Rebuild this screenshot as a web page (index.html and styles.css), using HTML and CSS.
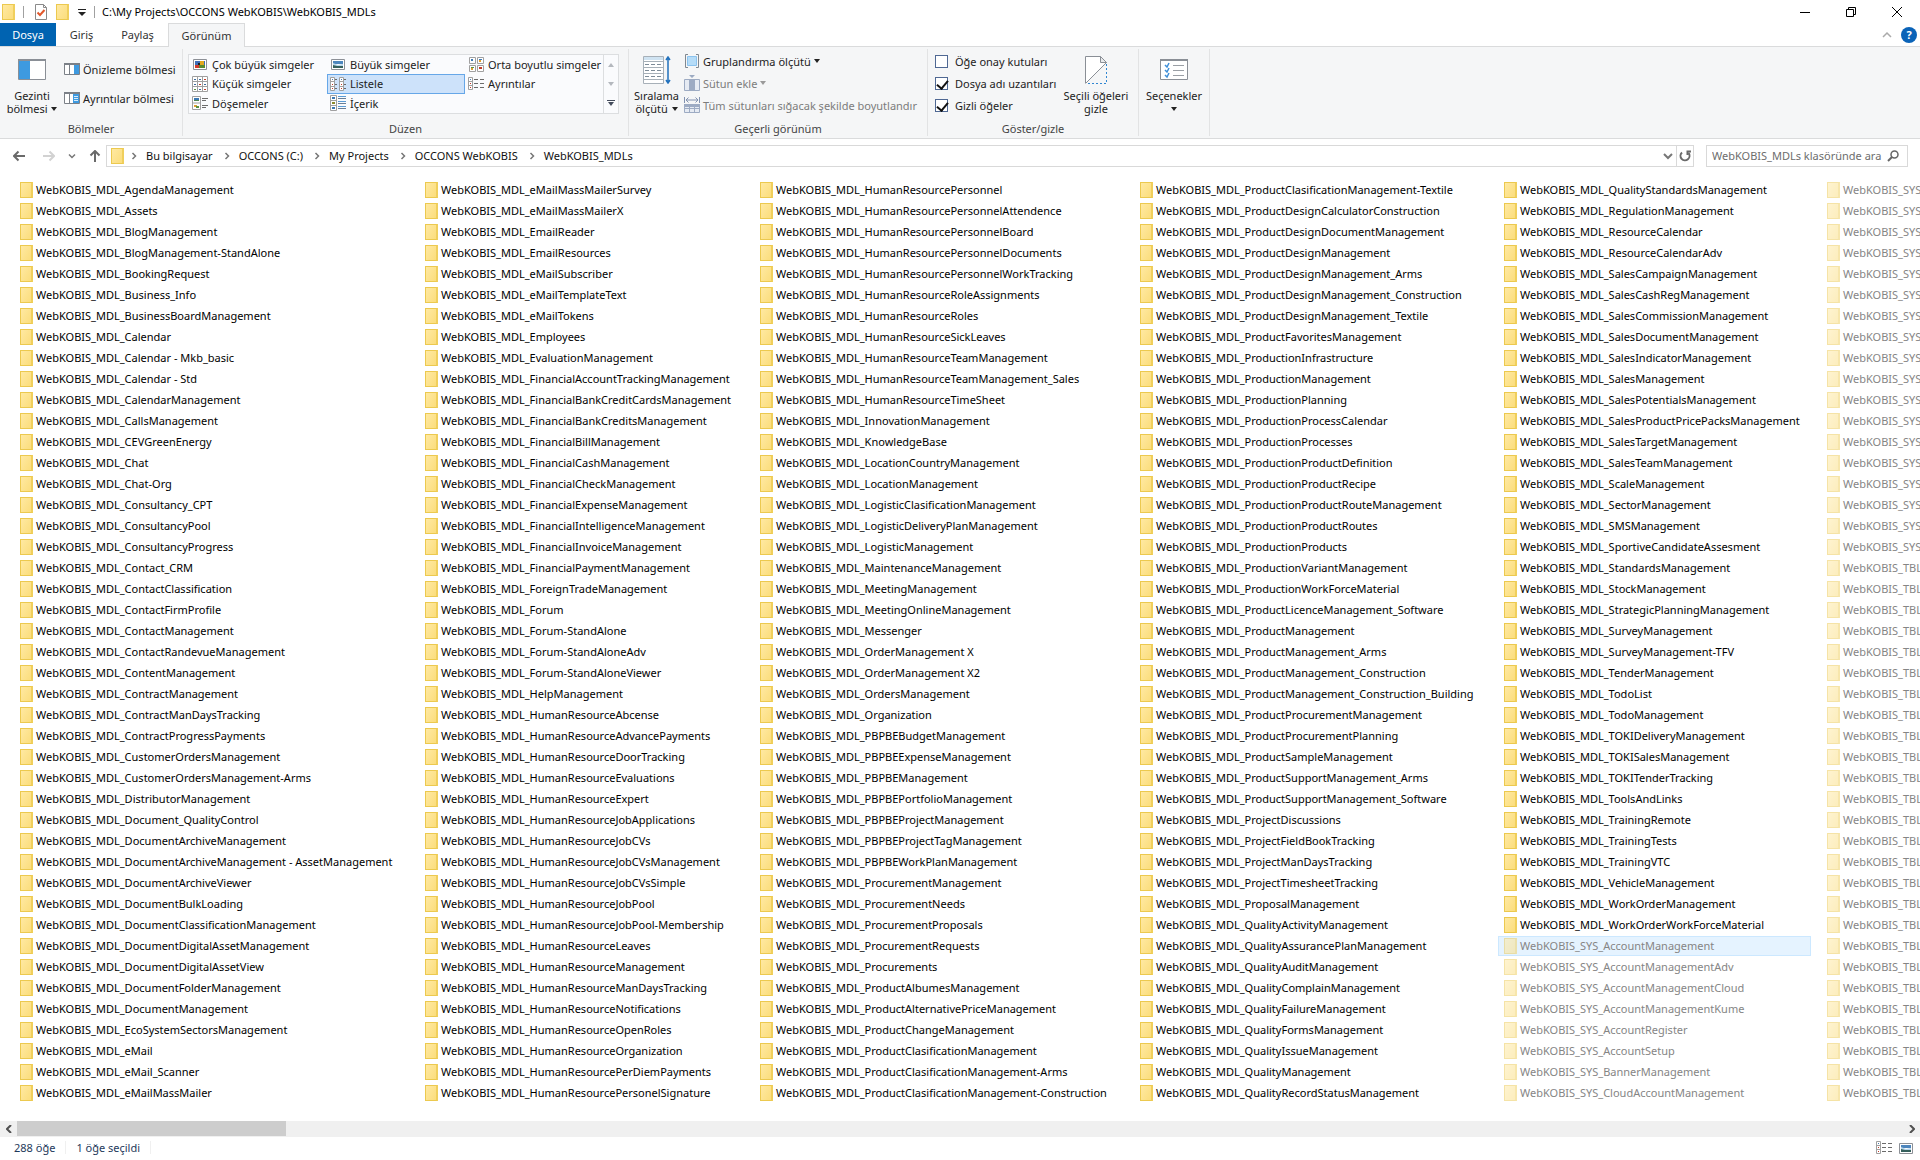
FILE: index.html
```html
<!DOCTYPE html>
<html lang="tr">
<head>
<meta charset="utf-8">
<title>C:\My Projects\OCCONS WebKOBIS\WebKOBIS_MDLs</title>
<link rel="stylesheet" href="styles.css">
</head>
<body>
<svg class="defs" aria-hidden="true">
  <symbol id="i-picture" viewBox="0 0 16 16">
    <path fill="#fff" stroke="#8c9096" d="M1.5 3.5h13v10h-13z"/>
    <path fill="#4d86bd" d="M3 5h10v3H3z"/><path fill="#b9d6ea" d="M3 7l5 2 5-1v2H3z"/><path fill="#35605c" d="M3 9l4 1h6v2H3z"/>
  </symbol>
  <symbol id="i-xlarge" viewBox="0 0 16 16">
    <path fill="#fff" stroke="#8c9096" d="M1.5 3.5h13v10h-13z"/>
    <path fill="#3f6fb8" d="M3 5h10v7H3z"/><path fill="#d23a2a" d="M3 9h4v3H3z"/><path fill="#e2a91e" d="M8 5h4v4H8z"/><path fill="#5a8a2f" d="M7 9h6v3H7z"/><path fill="#222" d="M6 7h2v2H6z"/>
  </symbol>
  <symbol id="i-medium" viewBox="0 0 16 16">
    <path fill="#fff" stroke="#a0a0a0" d="M1.5 1.5h6v6h-6zM9.500 1.5h6v6h-6zM1.500 9.500h6v6h-6zM9.500 9.500h6v6h-6z"/>
    <path fill="#3c79b4" d="M3 3h2v2H3zM11 3h3v1h-3z"/><path fill="#e0a030" d="M11 4h2v2h-2zM3 12h2v2H3z"/><path fill="#5a9140" d="M3 11h3v1H3z"/><path fill="#c33c2a" d="M11 11h3v2h-3z"/>
  </symbol>
  <symbol id="i-small" viewBox="0 0 16 16">
    <path fill="#fff" stroke="#a0a0a0" d="M.5.5h15v15H.5zM5.500.5v15M10.500.5v15M.5 5.500h15M.5 10.500h15"/>
    <path fill="#3c6b9c" d="M2 3h2v1H2zM7 3h2v1H7zM12 8h2v1h-2zM2 8h2v1H2zM7 13h2v1H7z"/><path fill="#c33c2a" d="M12 3h2v1h-2zM7 8h2v1H7zM12 13h2v1h-2z"/><path fill="#5a9140" d="M2 13h2v1H2z"/>
  </symbol>
  <symbol id="i-list" viewBox="0 0 16 16">
    <path fill="#fff" stroke="#a0a0a0" d="M.5 1.500h4v13h-4zM.5 5.500h4M.5 10.500h4M9.500 1.500h4v13h-4zM9.500 5.500h4M9.500 10.500h4"/>
    <path fill="#4a7bb0" d="M2 3h1v1H2zM11 3h1v1h-1z"/><path fill="#c33c2a" d="M2 12h1v1H2zM11 12h1v1h-1zM2 8h1v1H2zM11 8h1v1h-1z"/>
    <path stroke="#6b6b6b" d="M5 3.500h2M5 8.500h2M5 12.500h2M14 3.500h2M14 8.500h2M14 12.500h2"/>
  </symbol>
  <symbol id="i-details" viewBox="0 0 16 16">
    <path fill="#fff" stroke="#a0a0a0" d="M.5 1.500h4v12h-4zM.5 5.500h4M.5 9.500h4"/>
    <path fill="#4a7bb0" d="M2 3h1v1H2z"/><path fill="#c33c2a" d="M2 7h1v1H2zM2 11h1v1H2z"/>
    <path stroke="#6b6b6b" d="M6 3.500h4M12 3.500h4M6 7.500h4M12 7.500h4M6 11.500h4M12 11.500h4"/>
  </symbol>
  <symbol id="i-tiles" viewBox="0 0 16 16">
    <path fill="#fff" stroke="#a0a0a0" d="M.500 1.500h8v13h-8zM.500 8h8"/>
    <path fill="#3c79b4" d="M2 3h5v2H2z"/><path fill="#4d8450" d="M2 5h5v1H2z"/><path fill="#e0a030" d="M2 10h3v2H2z"/><path fill="#5a9140" d="M4 11h3v2H4z"/>
    <path stroke="#6b6b6b" d="M10 3.500h6M10 5.500h4M10 10.500h6M10 12.500h4"/>
  </symbol>
  <symbol id="i-content" viewBox="0 0 16 16">
    <path fill="#fff" stroke="#a0a0a0" d="M.500.5h6v15h-6zM.500 5.500h6M.500 10.500h6"/>
    <path fill="#3c79b4" d="M2 2h3v2H2zM2 12h3v2H2z"/><path fill="#8c8a2a" d="M2 7h3v2H2z"/>
    <path stroke="#5b9bd5" d="M8 1.500h8M8 6.500h8M8 11.500h8"/><path stroke="#6b7f96" d="M8 3.500h8M8 8.500h8M8 13.500h8"/>
  </symbol>
  <symbol id="i-chevron" viewBox="0 0 6 8"><path fill="none" stroke="#777" stroke-width="1.500" d="M1.500 1 4.500 4 1.500 7"/></symbol>
  <symbol id="i-down" viewBox="0 0 10 8"><path fill="none" stroke="#777" stroke-width="2" d="M1 2l4 4 4-4"/></symbol>
</svg>

<header class="titlebar">
  <span class="folder"></span>
  <span class="divider"></span>
  <button class="plain" aria-label="Özellikler"><svg width="12" height="16" viewBox="0 0 12 16"><path fill="#fff" stroke="#8a8a8a" d="M.5.5h8l3 3v12H.5z"/><path fill="none" stroke="#8a8a8a" d="M8.500.5v3h3"/><path fill="none" stroke="#e2582c" stroke-width="2" d="M2.500 8.500 5 11l4.500-5"/></svg></button>
  <button class="plain" aria-label="Yeni klasör"><span class="folder"></span></button>
  <button class="plain" aria-label="Özelleştir"><svg width="8" height="8" viewBox="0 0 8 8"><path fill="#222" d="M0 1h8v1H0zM0 4h8L4 8z"/></svg></button>
  <span class="divider"></span>
  <h1>C:\My Projects\OCCONS WebKOBIS\WebKOBIS_MDLs</h1>
  <div class="window-buttons">
    <button class="plain" aria-label="Simge durumuna küçült"><svg width="10" height="10" viewBox="0 0 10 10"><path stroke="#000" d="M0 5.500h10"/></svg></button>
    <button class="plain" aria-label="Önceki boyut"><svg width="10" height="10" viewBox="0 0 10 10"><path fill="none" stroke="#000" d="M.5 2.500h7v7h-7zM2.500 2.500v-2h7v7h-2"/></svg></button>
    <button class="plain" aria-label="Kapat"><svg width="10" height="10" viewBox="0 0 10 10"><path stroke="#000" d="M0 0l10 10M10 0 0 10"/></svg></button>
  </div>
</header>

<nav class="tabs">
  <button class="tab file-tab">Dosya</button>
  <button class="tab home-tab">Giriş</button>
  <button class="tab share-tab">Paylaş</button>
  <button class="tab active">Görünüm</button>
  <div class="tab-tools">
    <button class="plain" aria-label="Şeridi simge durumuna küçült"><svg width="10" height="8" viewBox="0 0 10 8"><path fill="none" stroke="#aaa" stroke-width="1.500" d="M1 6l4-4 4 4"/></svg></button>
    <button class="help" aria-label="Yardım">?</button>
  </div>
</nav>

<section class="ribbon">
  <div class="group panes">
    <div class="group-body">
      <button class="big">
        <svg width="28" height="22" viewBox="0 0 28 22"><path fill="#fff" stroke="#8a8f96" d="M.5.5h27v20H.5z"/><path fill="#8a8f96" d="M0 0h28v2H0z"/><path fill="#3e9ae0" d="M1 2h11v18H1z"/></svg>
        <span>Gezinti<br>bölmesi <i class="arrow"></i></span>
      </button>
      <div class="stack pane-stack">
        <button class="small"><svg width="16" height="12" viewBox="0 0 16 12"><path fill="#fff" stroke="#7b8087" d="M.5.5h15v11H.5zM5.500 1v10"/><path fill="#7b8087" d="M0 0h16v2H0z"/><path fill="#3e9ae0" d="M10 2h5v9h-5z"/></svg>Önizleme bölmesi</button>
        <button class="small"><svg width="16" height="12" viewBox="0 0 16 12"><path fill="#fff" stroke="#7b8087" d="M.5.5h15v11H.5zM5.500 1v10"/><path fill="#7b8087" d="M0 0h16v2H0z"/><path fill="#3e9ae0" d="M9 2h6v9H9z"/><path stroke="#d8ecfb" d="M10 4.500h4M10 6.500h4M10 8.500h4"/></svg>Ayrıntılar bölmesi</button>
      </div>
    </div>
    <h2>Bölmeler</h2>
  </div>
  <div class="group layout">
    <div class="gallery">
      <div class="gallery-grid">
        <button class="cell"><svg><use href="#i-xlarge"/></svg>Çok büyük simgeler</button>
        <button class="cell"><svg><use href="#i-picture"/></svg>Büyük simgeler</button>
        <button class="cell"><svg><use href="#i-medium"/></svg>Orta boyutlu simgeler</button>
        <button class="cell"><svg><use href="#i-small"/></svg>Küçük simgeler</button>
        <button class="cell chosen"><svg><use href="#i-list"/></svg>Listele</button>
        <button class="cell"><svg><use href="#i-details"/></svg>Ayrıntılar</button>
        <button class="cell"><svg><use href="#i-tiles"/></svg>Döşemeler</button>
        <button class="cell"><svg><use href="#i-content"/></svg>İçerik</button>
      </div>
      <div class="gallery-scroll">
        <button class="plain" aria-label="Yukarı"><svg width="6" height="4" viewBox="0 0 6 4"><path fill="#b4b8be" d="M0 4h6L3 0z"/></svg></button>
        <button class="plain" aria-label="Aşağı"><svg width="6" height="4" viewBox="0 0 6 4"><path fill="#b4b8be" d="M0 0h6L3 4z"/></svg></button>
        <button class="plain" aria-label="Diğer"><svg width="8" height="6" viewBox="0 0 8 6"><path fill="#444c5c" d="M0 0h8v1H0zM1 2h6L4 6z"/></svg></button>
      </div>
    </div>
    <h2>Düzen</h2>
  </div>
  <div class="group current">
    <div class="group-body">
      <button class="big">
        <svg width="28" height="28" viewBox="0 0 28 28"><path fill="#fff" stroke="#a7b0b8" d="M.5.500h20v27H.5zM.5 5.500h20M.5 11.500h20M.5 17.500h20M.5 23.500h20"/><path fill="#cfe3f2" d="M1 1h19v3H1z"/><path stroke="#7d8b97" stroke-dasharray="4 2" d="M2 8.500h18M2 14.500h18M2 20.500h18"/><path fill="none" stroke="#2272bd" stroke-width="1.500" d="M25 2v24M23 4l2-3 2 3M23 24l2 3 2-3"/></svg>
        <span>Sıralama<br>ölçütü <i class="arrow"></i></span>
      </button>
      <div class="stack">
        <button class="small"><svg width="16" height="16" viewBox="0 0 16 16"><path fill="none" stroke="#808890" d="M4 1.500H1.500v13H4M12 1.500h2.500v13H12"/><path fill="#b5dcf8" stroke="#8cc3ee" d="M3.500 3.500h9v9h-9z"/></svg>Gruplandırma ölçütü <i class="arrow"></i></button>
        <button class="small" disabled><svg width="16" height="16" viewBox="0 0 16 16"><path fill="#e6ebf3" stroke="#9dabc3" d="M.5 4.500h15v11H.5zM5.500 4v11M10.500 4v11"/><path fill="#9dabc3" d="M6 5h4v10H6zM5 0h6L8 3z"/></svg>Sütun ekle <i class="arrow"></i></button>
        <button class="small" disabled><svg width="16" height="16" viewBox="0 0 16 16"><path fill="#e6ebf3" stroke="#9dabc3" d="M.5 7.500h15v8H.5zM.5 11.500h15M5.500 10v5M10.500 10v5"/><path fill="#9dabc3" d="M0 7h16v3H0z"/><path fill="none" stroke="#8292b0" d="M.5 0v6M15.500 0v6M2 3h12M4.500.500 2 3l2.500 2.500M11.500.5 14 3l-2.500 2.500"/></svg>Tüm sütunları sığacak şekilde boyutlandır</button>
      </div>
    </div>
    <h2>Geçerli görünüm</h2>
  </div>
  <div class="group show">
    <div class="group-body">
      <div class="stack">
        <label class="check"><input type="checkbox">Öğe onay kutuları</label>
        <label class="check"><input type="checkbox" checked>Dosya adı uzantıları</label>
        <label class="check"><input type="checkbox" checked>Gizli öğeler</label>
      </div>
      <button class="big">
        <svg width="22" height="28" viewBox="0 0 22 28"><path fill="#fff" d="M.5 27V.5h15l6 6z"/><path fill="none" stroke="#8a8f96" d="M.5 27V.5h15l6 6L.5 27.500"/><path fill="#e8eaec" stroke="#8a8f96" d="M15.500.5v6h6z"/><path fill="none" stroke="#2f86d2" stroke-dasharray="2 2" d="M21.500 8v19.500H2"/></svg>
        <span>Seçili öğeleri<br>gizle</span>
      </button>
    </div>
    <h2>Göster/gizle</h2>
  </div>
  <div class="group options">
    <div class="group-body">
      <button class="big">
        <svg width="28" height="22" viewBox="0 0 28 22"><path fill="#fff" stroke="#8a8f96" d="M.5.500h27v20H.5z"/><path fill="#8a8f96" d="M0 0h28v2H0z"/><path fill="none" stroke="#3e8fd8" stroke-width="1.500" d="M5 6l2 2 2-4M5 11l2 2 2-4M5 16l2 2 2-4"/><path stroke="#9a9fa5" d="M13 6.500h11M13 11.500h11M13 16.500h11"/></svg>
        <span>Seçenekler<br><i class="arrow"></i></span>
      </button>
    </div>
  </div>
</section>

<div class="address-row">
  <div class="nav-buttons">
    <button class="plain" aria-label="Geri"><svg width="12" height="12" viewBox="0 0 12 12"><path fill="none" stroke="#6a6a6a" stroke-width="2" d="M12 6H1M5.500 1.500 1 6l4.500 4.500"/></svg></button>
    <button class="plain" aria-label="İleri"><svg width="12" height="12" viewBox="0 0 12 12"><path fill="none" stroke="#d2d2d2" stroke-width="2" d="M0 6h11M6.500 1.500 11 6l-4.500 4.500"/></svg></button>
    <button class="plain recent" aria-label="Son konumlar"><svg width="8" height="6" viewBox="0 0 10 8"><path fill="none" stroke="#777" stroke-width="2" d="M1 2l4 4 4-4"/></svg></button>
    <button class="plain" aria-label="Yukarı"><svg width="12" height="12" viewBox="0 0 12 12"><path fill="none" stroke="#6a6a6a" stroke-width="2" d="M6 12V1M1.500 5.500 6 1l4.500 4.500"/></svg></button>
  </div>
  <div class="address">
    <span class="folder"></span>
    <ol class="crumbs">
      <li><svg><use href="#i-chevron"/></svg><a href="#">Bu bilgisayar</a></li>
      <li><svg><use href="#i-chevron"/></svg><a href="#">OCCONS (C:)</a></li>
      <li><svg><use href="#i-chevron"/></svg><a href="#">My Projects</a></li>
      <li><svg><use href="#i-chevron"/></svg><a href="#">OCCONS WebKOBIS</a></li>
      <li><svg><use href="#i-chevron"/></svg><a href="#">WebKOBIS_MDLs</a></li>
    </ol>
    <button class="plain history" aria-label="Önceki konumlar"><svg width="10" height="8"><use href="#i-down"/></svg></button>
    <button class="plain refresh" aria-label="Yenile"><svg width="12" height="12" viewBox="0 0 12 12"><path fill="none" stroke="#6a6a6a" stroke-width="2" d="M9.500 3A4.500 4.500 0 1 1 3 2.500"/><path fill="none" stroke="#6a6a6a" stroke-width="2" d="M12 1.500H8.500V5"/></svg></button>
  </div>
  <div class="search">
    <input type="text" placeholder="WebKOBIS_MDLs klasöründe ara" aria-label="WebKOBIS_MDLs klasöründe ara">
    <svg width="12" height="12" viewBox="0 0 12 12"><circle cx="7.500" cy="4.500" r="3.500" fill="none" stroke="#666" stroke-width="1.500"/><path stroke="#666" stroke-width="2" d="M5 7 1 11"/></svg>
  </div>
</div>

<main><ul class="files" id="files" role="listbox" aria-label="Dosyalar"></ul></main>

<div class="scrollbar">
  <button class="plain" aria-label="Sola kaydır"><svg width="6" height="8" viewBox="0 0 6 8"><path fill="none" stroke="#505050" stroke-width="2" d="M5 0 1 4l4 4"/></svg></button>
  <div class="track"><div class="thumb"></div></div>
  <button class="plain" aria-label="Sağa kaydır"><svg width="6" height="8" viewBox="0 0 6 8"><path fill="none" stroke="#505050" stroke-width="2" d="M1 0l4 4-4 4"/></svg></button>
</div>

<footer class="status">
  <span>288 öğe</span>
  <span>1 öğe seçildi</span>
  <div class="view-switch">
    <button class="plain" aria-label="Ayrıntılar"><svg width="16" height="16"><use href="#i-details"/></svg></button>
    <button class="plain" aria-label="Büyük simgeler"><svg width="16" height="16"><use href="#i-picture"/></svg></button>
  </div>
</footer>
<script src="files.js"></script>
</body>
</html>
```
FILE: files.js
```js
// Folder names without the shared "WebKOBIS_" prefix, in display order.
const modules = `AgendaManagement|Assets|BlogManagement|BlogManagement-StandAlone|BookingRequest|Business_Info|BusinessBoardManagement|Calendar|Calendar - Mkb_basic|Calendar - Std|CalendarManagement|CallsManagement|CEVGreenEnergy|Chat|Chat-Org|Consultancy_CPT|ConsultancyPool|ConsultancyProgress|Contact_CRM|ContactClassification|ContactFirmProfile|ContactManagement|ContactRandevueManagement|ContentManagement|ContractManagement|ContractManDaysTracking|ContractProgressPayments|CustomerOrdersManagement|CustomerOrdersManagement-Arms|DistributorManagement|Document_QualityControl|DocumentArchiveManagement|DocumentArchiveManagement - AssetManagement|DocumentArchiveViewer|DocumentBulkLoading|DocumentClassificationManagement|DocumentDigitalAssetManagement|DocumentDigitalAssetView|DocumentFolderManagement|DocumentManagement|EcoSystemSectorsManagement|eMail|eMail_Scanner|eMailMassMailer
eMailMassMailerSurvey|eMailMassMailerX|EmailReader|EmailResources|eMailSubscriber|eMailTemplateText|eMailTokens|Employees|EvaluationManagement|FinancialAccountTrackingManagement|FinancialBankCreditCardsManagement|FinancialBankCreditsManagement|FinancialBillManagement|FinancialCashManagement|FinancialCheckManagement|FinancialExpenseManagement|FinancialIntelligenceManagement|FinancialInvoiceManagement|FinancialPaymentManagement|ForeignTradeManagement|Forum|Forum-StandAlone|Forum-StandAloneAdv|Forum-StandAloneViewer|HelpManagement|HumanResourceAbcense|HumanResourceAdvancePayments|HumanResourceDoorTracking|HumanResourceEvaluations|HumanResourceExpert|HumanResourceJobApplications|HumanResourceJobCVs|HumanResourceJobCVsManagement|HumanResourceJobCVsSimple|HumanResourceJobPool|HumanResourceJobPool-Membership|HumanResourceLeaves|HumanResourceManagement|HumanResourceManDaysTracking|HumanResourceNotifications|HumanResourceOpenRoles|HumanResourceOrganization|HumanResourcePerDiemPayments|HumanResourcePersonelSignature
HumanResourcePersonnel|HumanResourcePersonnelAttendence|HumanResourcePersonnelBoard|HumanResourcePersonnelDocuments|HumanResourcePersonnelWorkTracking|HumanResourceRoleAssignments|HumanResourceRoles|HumanResourceSickLeaves|HumanResourceTeamManagement|HumanResourceTeamManagement_Sales|HumanResourceTimeSheet|InnovationManagement|KnowledgeBase|LocationCountryManagement|LocationManagement|LogisticClasificationManagement|LogisticDeliveryPlanManagement|LogisticManagement|MaintenanceManagement|MeetingManagement|MeetingOnlineManagement|Messenger|OrderManagement X|OrderManagement X2|OrdersManagement|Organization|PBPBEBudgetManagement|PBPBEExpenseManagement|PBPBEManagement|PBPBEPortfolioManagement|PBPBEProjectManagement|PBPBEProjectTagManagement|PBPBEWorkPlanManagement|ProcurementManagement|ProcurementNeeds|ProcurementProposals|ProcurementRequests|Procurements|ProductAlbumesManagement|ProductAlternativePriceManagement|ProductChangeManagement|ProductClasificationManagement|ProductClasificationManagement-Arms|ProductClasificationManagement-Construction
ProductClasificationManagement-Textile|ProductDesignCalculatorConstruction|ProductDesignDocumentManagement|ProductDesignManagement|ProductDesignManagement_Arms|ProductDesignManagement_Construction|ProductDesignManagement_Textile|ProductFavoritesManagement|ProductionInfrastructure|ProductionManagement|ProductionPlanning|ProductionProcessCalendar|ProductionProcesses|ProductionProductDefinition|ProductionProductRecipe|ProductionProductRouteManagement|ProductionProductRoutes|ProductionProducts|ProductionVariantManagement|ProductionWorkForceMaterial|ProductLicenceManagement_Software|ProductManagement|ProductManagement_Arms|ProductManagement_Construction|ProductManagement_Construction_Building|ProductProcurementManagement|ProductProcurementPlanning|ProductSampleManagement|ProductSupportManagement_Arms|ProductSupportManagement_Software|ProjectDiscussions|ProjectFieldBookTracking|ProjectManDaysTracking|ProjectTimesheetTracking|ProposalManagement|QualityActivityManagement|QualityAssurancePlanManagement|QualityAuditManagement|QualityComplainManagement|QualityFailureManagement|QualityFormsManagement|QualityIssueManagement|QualityManagement|QualityRecordStatusManagement
QualityStandardsManagement|RegulationManagement|ResourceCalendar|ResourceCalendarAdv|SalesCampaignManagement|SalesCashRegManagement|SalesCommissionManagement|SalesDocumentManagement|SalesIndicatorManagement|SalesManagement|SalesPotentialsManagement|SalesProductPricePacksManagement|SalesTargetManagement|SalesTeamManagement|ScaleManagement|SectorManagement|SMSManagement|SportiveCandidateAssesment|StandardsManagement|StockManagement|StrategicPlanningManagement|SurveyManagement|SurveyManagement-TFV|TenderManagement|TodoList|TodoManagement|TOKIDeliveryManagement|TOKISalesManagement|TOKITenderTracking|ToolsAndLinks|TrainingRemote|TrainingTests|TrainingVTC|VehicleManagement|WorkOrderManagement|WorkOrderWorkForceMaterial`
  .split(/[|\n]/).map(name => ({ name: `MDL_${name}` }));

const system = ["AccountManagement", "AccountManagementAdv", "AccountManagementCloud", "AccountManagementKume",
  "AccountRegister", "AccountSetup", "BannerManagement", "CloudAccountManagement"]
  .map((name, i) => ({ name: `SYS_${name}`, hidden: true, selected: i === 0 }));

const hiddenRun = (name, count) => Array.from({ length: count }, () => ({ name, hidden: true }));

const list = document.getElementById("files");
for (const file of [...modules, ...system, ...hiddenRun("SYS", 18), ...hiddenRun("TBL", 26)]) {
  const item = document.createElement("li");
  item.className = "file" + (file.hidden ? " is-hidden" : "") + (file.selected ? " selected" : "");
  item.setAttribute("role", "option");
  item.setAttribute("aria-selected", String(Boolean(file.selected)));
  const icon = document.createElement("span");
  icon.className = "folder";
  const label = document.createElement("span");
  label.className = "name";
  label.textContent = `WebKOBIS_${file.name}`;
  item.append(icon, label);
  list.append(item);
}
```
FILE: styles.css
```css
* { box-sizing: border-box; }
body {
  margin: 0;
  min-height: 100vh;
  display: flex;
  flex-direction: column;
  overflow: hidden;
  background: #fff;
  color: #000;
  font: 11px/13px "Noto Sans", "Open Sans", sans-serif;
}
.defs { display: none; }
svg { flex: none; display: block; }
h1, h2 { margin: 0; font-size: inherit; font-weight: 400; }
button, input { font: inherit; color: inherit; }
button { padding: 0; border: 0; background: none; white-space: nowrap; }
.plain { display: flex; align-items: center; justify-content: center; }

.folder {
  flex: none;
  display: block;
  width: 13px;
  height: 16px;
  border: 1px solid #ecc94f;
  border-right-width: 2px;
  border-right-color: #f0cf5c;
  background: linear-gradient(120deg, #ffe9a2, #fbdd7c);
}

/* Title bar */
.titlebar { display: flex; align-items: center; height: 23px; padding-left: 2px; }
.titlebar .divider { width: 1px; height: 12px; margin: 0 11px 0 8px; background: #a0a0a0; }
.titlebar .plain + .plain { margin-left: 9px; }
.titlebar .plain + .divider { margin: 0 7px 0 8px; }
.window-buttons { display: flex; margin-left: auto; }
.window-buttons .plain, .window-buttons .plain + .plain { width: 46px; height: 23px; margin: 0; }

/* Tabs */
.tabs { display: flex; height: 24px; border-bottom: 1px solid #dadbdc; }
.tab { height: 23px; color: #333; }
.file-tab { width: 56px; background: #0063b1; color: #fff; }
.home-tab { width: 51px; }
.share-tab { width: 61px; }
.tab.active { width: 77px; height: 24px; border: 1px solid #dadbdc; border-bottom: 0; background: #f5f6f7; }
.tab-tools { display: flex; align-items: center; gap: 9px; margin-left: auto; padding-right: 3px; }
.help { width: 16px; height: 16px; border-radius: 8px; background: #0a63b8; color: #fff; font-weight: 700; }

/* Ribbon */
.ribbon { display: flex; height: 92px; border-bottom: 1px solid #dadbdc; background: #f5f6f7; color: #222; }
.group { display: flex; flex-direction: column; justify-content: space-between; margin: 2px 0; padding: 4px 0 1px; border-right: 1px solid #e2e3e4; }
.group h2 { text-align: center; color: #444; }
.group-body { display: flex; }
.panes { width: 183px; }
.layout { width: 446px; }
.current { width: 299px; }
.show { width: 211px; }
.options { width: 71px; }
.big { display: flex; flex-direction: column; align-items: center; justify-content: space-between; height: 62px; padding-top: 3px; }
.panes .big { width: 64px; padding-top: 6px; }
.current .big { width: 55px; }
.show .big { width: 80px; }
.options .big { width: 70px; padding-top: 6px; }
.arrow { display: inline-block; margin-left: 1px; border: 3px solid transparent; border-top: 4px solid #222; border-bottom: 0; vertical-align: 2px; }
.stack { display: flex; flex-direction: column; gap: 6px; }
.pane-stack { gap: 13px; padding-top: 8px; }
.small { display: flex; align-items: center; gap: 3px; height: 16px; }
.small .arrow { margin-left: 0; }
.small:disabled { color: #7c7c7c; }
.small:disabled .arrow { border-top-color: #9a9a9a; }
.check { display: flex; align-items: center; gap: 7px; height: 16px; }
.show .stack { width: 128px; padding-left: 7px; white-space: nowrap; }
.check input {
  appearance: none;
  flex: none;
  width: 13px;
  height: 13px;
  margin: 0;
  border: 1px solid #4f6893;
  background: #fff;
}
.check input:checked::before {
  content: "";
  display: block;
  width: 5px;
  height: 9px;
  margin: 0 0 0 3px;
  border: solid #111;
  border-width: 0 2px 2px 0;
  transform: rotate(40deg);
}
.gallery { display: flex; width: 431px; height: 60px; margin: 1px 0 0 5px; border: 1px solid #dcdee0; background: #fafbfd; }
.gallery-grid { flex: 1; display: grid; grid-template-columns: repeat(3, 138px); grid-template-rows: 19px 20px 19px; }
.cell { display: flex; align-items: center; gap: 4px; padding: 0 2px 1px; border: 1px solid transparent; }
.cell svg { width: 16px; height: 16px; }
.chosen { border-color: #66a7e8; background: #cde2fa; }
.gallery-scroll { display: grid; grid-template-rows: repeat(3, 1fr); width: 15px; border-left: 1px solid #dcdee0; }

/* Address row */
.address-row { display: flex; align-items: center; height: 34px; padding-right: 12px; }
.nav-buttons { display: flex; align-items: center; width: 106px; padding-left: 13px; gap: 18px; }
.recent { margin: 0 -5px; }
.address { flex: 1; display: flex; align-items: center; height: 22px; padding-left: 4px; border: 1px solid #d9d9d9; }
.crumbs { flex: 1; display: flex; margin: 0; padding: 0 0 0 7px; list-style: none; }
.crumbs li { display: flex; align-items: center; gap: 9px; margin-right: 11px; }
.crumbs svg { width: 6px; height: 8px; }
.crumbs a { padding-bottom: 2px; color: #111; text-decoration: none; }
.history { width: 16px; height: 20px; }
.refresh { width: 17px; height: 20px; border-left: 1px solid #d9d9d9; }
.search { display: flex; align-items: center; width: 202px; height: 22px; margin-left: 12px; padding: 0 8px 0 5px; border: 1px solid #d9d9d9; }
.search input { flex: 1; min-width: 0; padding: 0 0 2px; border: 0; outline: 0; background: none; }
.search input::placeholder { color: #6d6d6d; opacity: 1; }

/* File list */
main { flex: 1; overflow: hidden; padding: 7px 0 17px 14px; }
.files {
  display: grid;
  grid-auto-flow: column;
  grid-template-rows: repeat(44, 20px);
  grid-template-columns: 395px 325px 370px 354px 313px;
  gap: 1px 10px;
  margin: 0;
  padding: 0;
  list-style: none;
}
.file { display: flex; align-items: center; gap: 3px; padding: 0 5px; border: 1px solid transparent; white-space: nowrap; }
.name { padding-bottom: 2px; }
.file.is-hidden { color: #858585; }
.file.is-hidden .folder { opacity: .5; }
.file.selected { border-color: #cce8ff; background: #e5f3ff; }

/* Scrollbar and status bar */
.scrollbar { display: flex; height: 16px; background: #f0f0f0; }
.scrollbar .plain { width: 17px; }
.track { flex: 1; }
.thumb { width: 269px; height: 15px; background: #cdcdcd; }
.status { display: flex; align-items: center; height: 23px; padding: 0 6px 2px 14px; color: #1e395b; }
.status span { margin-right: 10px; padding-right: 10px; border-right: 1px solid #f0f0f0; }
.view-switch { display: flex; gap: 6px; margin-left: auto; }
```
